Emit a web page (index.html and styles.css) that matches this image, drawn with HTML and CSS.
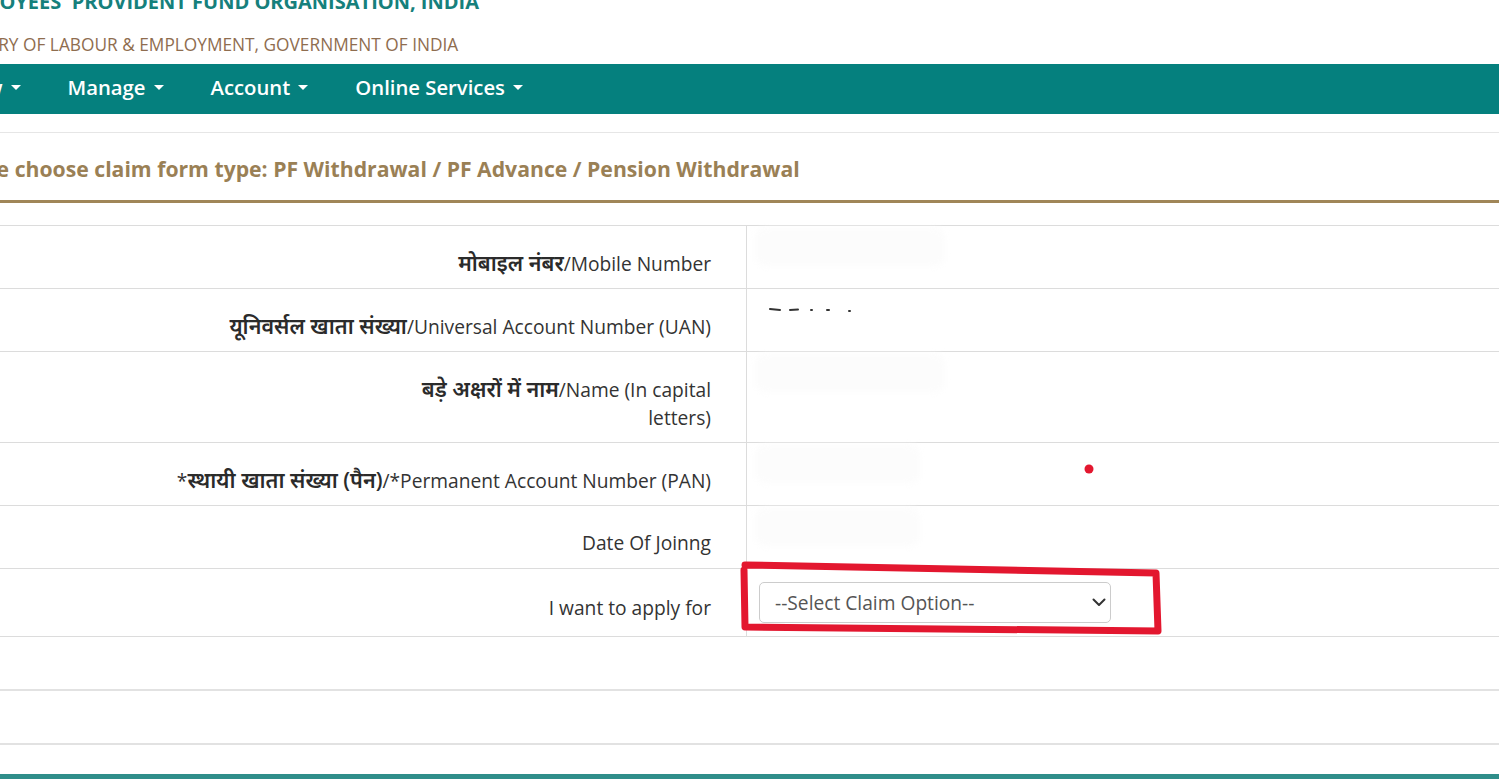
FILE: index.html
```html
<!DOCTYPE html>
<html lang="en">
<head>
  <meta charset="UTF-8" />
  <meta name="viewport" content="width=device-width, initial-scale=1.0"/>
  <title>Member e-SEWA - Claim</title>
  <link rel="stylesheet" href="styles.css">
</head>
<body>
  <div class="page">
    <header class="brand">
      <h1 class="brand-title">EMPLOYEES' PROVIDENT FUND ORGANISATION, INDIA</h1>
      <p class="brand-sub">MINISTRY OF LABOUR &amp; EMPLOYMENT, GOVERNMENT OF INDIA</p>
    </header>

    <nav class="menu">
      <ul>
        <li class="first">View <span class="caret"></span></li>
        <li>Manage <span class="caret"></span></li>
        <li>Account <span class="caret"></span></li>
        <li>Online Services <span class="caret"></span></li>
      </ul>
    </nav>

    <div class="panel">
      <h2 class="claim-title">Please choose claim form type: PF Withdrawal / PF Advance / Pension Withdrawal</h2>

      <div class="claim-form">
        <div class="row">
          <div class="label"><span class="hi">मोबाइल नंबर</span>/Mobile Number</div>
          <div class="value"><span class="blur-box"></span></div>
        </div>
        <div class="row">
          <div class="label"><span class="hi">यूनिवर्सल खाता संख्या</span>/Universal Account Number (UAN)</div>
          <div class="value">
            <svg class="smudge" width="90" height="12" viewBox="0 0 90 12">
              <g stroke="#333" stroke-width="2" stroke-linecap="round">
                <path d="M3 5 L13 6"/>
                <path d="M23 6 L31 5.5"/>
                <path d="M44 6 L45 6"/>
                <path d="M60 6 L62 6"/>
                <path d="M82 7 L83 7"/>
              </g>
            </svg>
          </div>
        </div>
        <div class="row">
          <div class="label"><span class="hi">बड़े अक्षरों में नाम</span>/Name (In capital<br>letters)</div>
          <div class="value"><span class="blur-box"></span></div>
        </div>
        <div class="row">
          <div class="label">*<span class="hi">स्थायी खाता संख्या (पैन)</span>/*Permanent Account Number (PAN)</div>
          <div class="value"><span class="blur-box short"></span></div>
        </div>
        <div class="row">
          <div class="label">Date Of Joinng</div>
          <div class="value"><span class="blur-box short"></span></div>
        </div>
        <div class="row apply">
          <div class="label">I want to apply for</div>
          <div class="value">
            <div class="select-wrap">
              <select class="claim-select">
                <option>--Select Claim Option--</option>
              </select>
              <svg class="chevron" width="14" height="9" viewBox="0 0 14 9">
                <path d="M1.5 1.5 L7 7 L12.5 1.5" fill="none" stroke="#333" stroke-width="2" stroke-linecap="round" stroke-linejoin="round"/>
              </svg>
            </div>
          </div>
        </div>
      </div>

      <div class="empty-row"></div>
      <div class="empty-row"></div>
    </div>

    <footer class="foot"></footer>

    <!-- hand drawn marks from the screenshot -->
    <svg class="marks" width="1499" height="779" viewBox="0 0 1499 779">
      <g fill="none" stroke="#e3172f" stroke-width="7" stroke-linecap="round" stroke-linejoin="round">
        <path d="M745 565 L1156 573 L1158 631 L745 627 L744 570"/>
      </g>
      <circle cx="1089" cy="469" r="4.5" fill="#e3172f"/>
    </svg>
  </div>
</body>
</html>
```

FILE: styles.css
```css
body {
  margin: 0;
  font-family: 'Open Sans', 'Noto Sans', sans-serif;
  background: #fff;
  color: #333;
  overflow: hidden;
}

.page {
  position: relative;
  width: 1499px;
  height: 779px;
  overflow: hidden;
}

/* header */
.brand {
  height: 64px;
  overflow: hidden;
}

.brand-title {
  margin: -11px 0 0 -54.5px;
  font-size: 20px;
  font-weight: 700;
  color: #16807c;
  white-space: nowrap;
  line-height: 26px;
}

.brand-sub {
  margin: 19px 0 0 -59px;
  font-size: 17.3px;
  color: #8f6d4f;
  white-space: nowrap;
  line-height: 22px;
}

/* nav */
.menu {
  background: #05807e;
  height: 50px;
}

.menu ul {
  list-style: none;
  margin: 0;
  padding: 0 0 4px 0;
  box-sizing: border-box;
  display: flex;
  align-items: center;
  height: 50px;
  gap: 47px;
}

.menu li {
  color: #fff;
  font-size: 20.3px;
  font-weight: 600;
  white-space: nowrap;
  display: flex;
  align-items: center;
}

.menu li.first {
  margin-left: -44px;
}

.caret {
  display: inline-block;
  width: 0;
  height: 0;
  margin-left: 8px;
  border-left: 5px solid transparent;
  border-right: 5px solid transparent;
  border-top: 5px solid #fff;
}

/* panel */
.panel {
  margin-top: 18px;
  border-top: 1px solid #e6e6e6;
}

.claim-title {
  margin: 0 0 0 -59px;
  padding: 20px 0 16px;
  font-size: 21.2px;
  font-weight: 700;
  color: #9a8055;
  white-space: nowrap;
  line-height: 31px;
  border-bottom: 3px solid #a08658;
  width: calc(100% + 59px);
}

.claim-form {
  margin-top: 22px;
  border-bottom: 1px solid #dcdcdc;
}

.row {
  display: grid;
  grid-template-columns: 747px 1fr;
  border-top: 1px solid #dcdcdc;
}

.label {
  text-align: right;
  padding: 23px 35px 11px 0;
  font-size: 19.2px;
  line-height: 28px;
  height: 28px;
  color: #333;
  border-right: 1px solid #dcdcdc;
}

.row:nth-child(3) .label {
  height: 56px;
}

.hi {
  font-size: 21.5px;
  font-weight: 600;
  color: #2b2b2b;
}

.value {
  padding: 2px 0 0 8px;
}

.blur-box {
  display: block;
  width: 190px;
  height: 38px;
  background: #fcfcfc;
  border-radius: 10px;
  filter: blur(3px);
}

.blur-box.short {
  width: 165px;
}

.smudge {
  display: block;
  margin: 13px 0 0 12px;
  filter: blur(0.6px);
}

.row.apply .label {
  padding-top: 25px;
  padding-bottom: 14px;
}

.row.apply .value {
  padding: 13px 0 0 12px;
}

.select-wrap {
  position: relative;
  width: 352px;
}

.claim-select {
  appearance: none;
  -webkit-appearance: none;
  width: 352px;
  height: 41px;
  padding: 0 30px 0 15px;
  font-family: 'Open Sans', 'Noto Sans', sans-serif;
  font-size: 19.2px;
  color: #555;
  background: #fff;
  border: 1px solid #ccc;
  border-radius: 5px;
}

.chevron {
  position: absolute;
  right: 5px;
  top: 16px;
}

.empty-row {
  height: 52px;
  border-bottom: 2px solid #e2e2e2;
}

.foot {
  margin-top: 29px;
  height: 10px;
  background: #2f8e8a;
}

.marks {
  position: absolute;
  left: 0;
  top: 0;
  pointer-events: none;
}
```
